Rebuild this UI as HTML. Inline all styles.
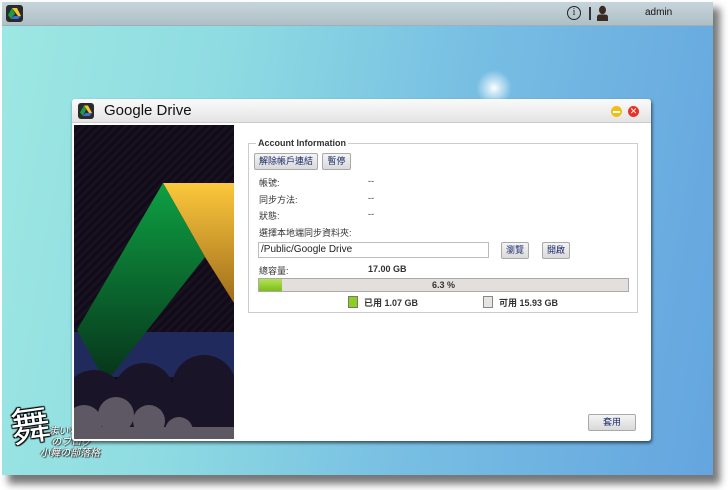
<!DOCTYPE html>
<html><head><meta charset="utf-8">
<style>
*{margin:0;padding:0;box-sizing:border-box}
body{width:728px;height:490px;background:#fff;position:relative;overflow:hidden;font-family:"Liberation Sans","Noto Sans CJK TC",sans-serif}
#shadow{position:absolute;left:8px;top:8px;width:712px;height:476px;background:#777;filter:blur(4px)}
#screen{position:absolute;left:2px;top:2px;width:711px;height:473px;overflow:hidden;
background:linear-gradient(100deg,#9de8e2 0%,#8edbe2 30%,#78bfe3 60%,#64a5df 100%)}
#glow{position:absolute;left:474px;top:68px;width:36px;height:36px;border-radius:50%;background:radial-gradient(circle,#fff 0%,rgba(255,255,255,.6) 25%,rgba(255,255,255,0) 70%)}
#bar{position:absolute;left:0;top:0;width:711px;height:24px;background:linear-gradient(#c6d5db,#aebfc6);border-bottom:1px solid #9fb0b8}
#appicon{position:absolute;left:4px;top:3px;width:17px;height:17px;background:#2a2a2a;border-radius:3px}
#win{position:absolute;left:70px;top:97px;width:579px;height:342px;background:#fff;box-shadow:1px 2px 3px rgba(0,0,0,.6);border-radius:3px}
#title{position:absolute;left:0;top:0;width:579px;height:24px;background:linear-gradient(#fafafa,#e4e4e4);border-bottom:1px solid #ccc;border-radius:3px 3px 0 0}
#title span{position:absolute;left:32px;top:3px;font-size:15px;color:#111}
#art{position:absolute;left:2px;top:26px;width:160px;height:314px;overflow:hidden}
.t{position:absolute;font-size:9px;color:#333}
.btn{position:absolute;height:17px;border:1px solid #a9a9a9;border-radius:2px;background:linear-gradient(#f4f4f4,#d9d9d9);font-size:9px;color:#1a2a6a;text-align:center;line-height:15px}
</style></head><body>
<div id="shadow"></div>
<div id="screen">
 <div id="glow"></div>
 <div id="bar">
  <div id="appicon"><svg width="17" height="17" viewBox="0 0 17 17"><polygon points="6,3 11,3 15,11 12,11" fill="#f7c531"/><polygon points="6,3 9,8.5 5,14 2,10" fill="#1a9d48"/><polygon points="5,14 8,11 15,11 12,14" fill="#3b6fd8"/></svg></div>
  <div style="position:absolute;left:565px;top:4px;width:14px;height:14px;border:1.5px solid #222;border-radius:50%;font-size:10px;line-height:11px;text-align:center;color:#222;font-family:'Liberation Serif',serif">i</div>
  <div style="position:absolute;left:587px;top:5px;width:1.5px;height:13px;background:#333"></div>
  <svg style="position:absolute;left:594px;top:3px" width="13" height="16" viewBox="0 0 13 16"><ellipse cx="6.5" cy="5" rx="3.5" ry="4.2" fill="#3a2a22"/><path d="M1 16 L1 12 Q1 9.5 4 9.5 L9 9.5 Q12 9.5 12 12 L12 16Z" fill="#3a2a22"/></svg>
  <div style="position:absolute;left:643px;top:5px;font-size:10px;color:#111">admin</div>
 </div>
 <div style="position:absolute;left:8px;top:392px;font-size:40px;color:#fff;transform:rotate(-8deg);text-shadow:1px 1px 1px #000,-1px -1px 1px #000,1px -1px 1px #000,-1px 1px 1px #000">舞</div>
 <div style="position:absolute;left:38px;top:424px;font-size:10px;color:#fff;font-style:italic;line-height:11px;text-shadow:1px 1px 1px #222,-1px 0 1px #222">&nbsp;&nbsp;&nbsp;まいちゃん<br>&nbsp;&nbsp;&nbsp;&nbsp;のブログ<br>小舞の部落格</div>
 <div id="win">
  <div id="title">
   <svg style="position:absolute;left:6px;top:4px" width="16" height="16" viewBox="0 0 16 16"><rect width="16" height="16" rx="3" fill="#2b2b2b"/><polygon points="6,2.5 10,2.5 14,10 11,10" fill="#f7c531"/><polygon points="6,2.5 8,6.5 5,13 2,9.5" fill="#1a9d48"/><polygon points="5,13 7.5,10 14,10 11.5,13" fill="#3b6fd8"/></svg>
   <span>Google Drive</span>
   <div style="position:absolute;left:539px;top:7px;width:11px;height:11px;border-radius:50%;background:#f3be12"><div style="margin:4.5px 2px;height:2px;background:#fff"></div></div>
   <div style="position:absolute;left:556px;top:7px;width:11px;height:11px;border-radius:50%;background:#e63328;color:#fff;font-size:9px;line-height:11px;text-align:center">✕</div>
  </div>
  <div id="art">
   <svg width="160" height="314" viewBox="0 0 160 314">
    <defs>
     <linearGradient id="g" x1="0" y1="0" x2="0" y2="1"><stop offset="0" stop-color="#0ea043"/><stop offset="1" stop-color="#07321a"/></linearGradient>
     <linearGradient id="y" x1="0" y1="0" x2="0" y2="1"><stop offset="0" stop-color="#fcc83c"/><stop offset="1" stop-color="#a06d1c"/></linearGradient>
     <pattern id="st" width="6" height="6" patternUnits="userSpaceOnUse" patternTransform="rotate(45)"><rect width="6" height="6" fill="#110a18"/><rect width="3" height="6" fill="#181120"/></pattern>
    </defs>
    <rect width="160" height="314" fill="url(#st)"/>
    <rect x="0" y="207" width="160" height="45" fill="#212a5c"/>
    <polygon points="89,58 160,58 160,178 131,132" fill="url(#y)"/>
    <polygon points="89,58 131,132 32,258 3,205" fill="url(#g)"/>
    <circle cx="20" cy="275" r="30" fill="#1a1428"/><circle cx="70" cy="268" r="30" fill="#1a1428"/><circle cx="130" cy="262" r="32" fill="#1a1428"/>
    <rect y="268" width="160" height="46" fill="#1a1428"/>
    <circle cx="10" cy="298" r="18" fill="#5e5864"/><circle cx="42" cy="290" r="18" fill="#5e5864"/><circle cx="75" cy="296" r="16" fill="#5e5864"/><circle cx="105" cy="306" r="14" fill="#5e5864"/>
    <rect y="302" width="160" height="12" fill="#5e5864"/>
   </svg>
  </div>
  <div style="position:absolute;left:176px;top:44px;width:390px;height:170px;border:1px solid #ccc"></div>
  <div class="t" style="left:184px;top:39px;background:#fff;padding:0 2px;font-weight:bold;color:#333">Account Information</div>
  <div class="btn" style="left:182px;top:54px;width:64px">解除帳戶連結</div>
  <div class="btn" style="left:250px;top:54px;width:29px">暫停</div>
  <div class="t" style="left:187px;top:77px">帳號:</div><div class="t" style="left:296px;top:77px">--</div>
  <div class="t" style="left:187px;top:94px">同步方法:</div><div class="t" style="left:296px;top:94px">--</div>
  <div class="t" style="left:187px;top:110px">狀態:</div><div class="t" style="left:296px;top:110px">--</div>
  <div class="t" style="left:187px;top:127px">選擇本地端同步資料夾:</div>
  <div style="position:absolute;left:186px;top:143px;width:231px;height:16px;border:1px solid #bbb;font-size:10px;color:#222;padding-left:2px;line-height:14px">/Public/Google Drive</div>
  <div class="btn" style="left:429px;top:143px;width:28px">瀏覽</div>
  <div class="btn" style="left:470px;top:143px;width:28px">開啟</div>
  <div class="t" style="left:187px;top:165px">總容量:</div><div class="t" style="left:296px;top:165px;font-weight:bold">17.00 GB</div>
  <div style="position:absolute;left:186px;top:179px;width:371px;height:14px;border:1px solid #aaa;background:#e2dfdc;font-size:9px;font-weight:bold;color:#333;text-align:center;line-height:12px">
   <div style="position:absolute;left:0;top:0;width:23px;height:12px;background:linear-gradient(#b5e05a,#7cbf14)"></div>6.3 %</div>
  <div style="position:absolute;left:276px;top:197px;width:10px;height:12px;background:#8ccf1e;border:1px solid #777"></div>
  <div class="t" style="left:292px;top:197px;font-weight:bold">已用 1.07 GB</div>
  <div style="position:absolute;left:411px;top:197px;width:10px;height:12px;background:#e6e3e0;border:1px solid #888"></div>
  <div class="t" style="left:427px;top:197px;font-weight:bold">可用 15.93 GB</div>
  <div class="btn" style="left:516px;top:315px;width:48px;height:17px">套用</div>
 </div>
</div>
</body></html>
